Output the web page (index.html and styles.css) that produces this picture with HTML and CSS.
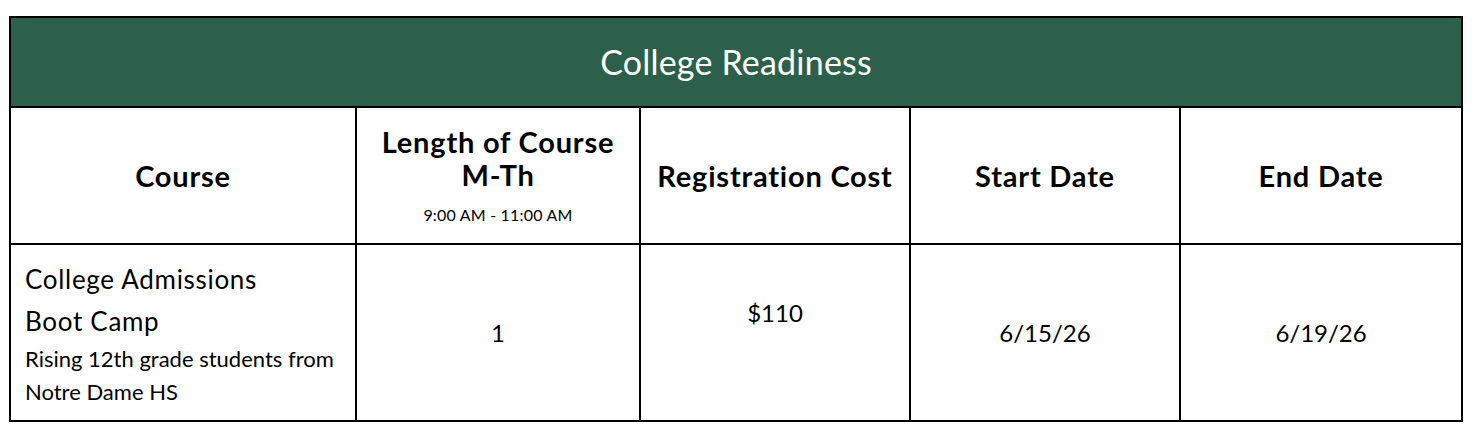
FILE: index.html
```html
<!DOCTYPE html>
<html>
<head>
<meta charset="utf-8">
<link rel="stylesheet" href="styles.css">
</head>
<body>
<table class="sched">
  <colgroup>
    <col class="c1"><col class="c2"><col class="c3"><col class="c4"><col class="c5">
  </colgroup>
  <thead>
    <tr class="title-row"><th colspan="5" class="title">College Readiness</th></tr>
    <tr class="head-row">
      <th>Course</th>
      <th><div>Length of Course</div><div>M-Th</div><div class="time">9:00 AM - 11:00 AM</div></th>
      <th>Registration Cost</th>
      <th>Start Date</th>
      <th>End Date</th>
    </tr>
  </thead>
  <tbody>
    <tr class="body-row">
      <td class="course"><div class="big">College Admissions</div><div class="big">Boot Camp</div><div class="small">Rising 12th grade students from</div><div class="small">Notre Dame HS</div></td>
      <td>1</td>
      <td class="cost">$110</td>
      <td>6/15/26</td>
      <td>6/19/26</td>
    </tr>
  </tbody>
</table>
</body>
</html>
```
FILE: styles.css
```css
html, body {
  margin: 0;
  padding: 0;
  background: #fff;
}
body {
  padding: 16px 0 0 9px;
  font-family: "Lato", "Open Sans", sans-serif;
  color: #000;
}
.sched {
  border-collapse: collapse;
  width: 1452px;
  table-layout: fixed;
}
.c1 { width: 346px; }
.c2 { width: 284px; }
.c3 { width: 270px; }
.c4 { width: 270px; }
.c5 { width: 282px; }
.sched th, .sched td {
  border: 2px solid #000;
  text-align: center;
  vertical-align: middle;
  padding: 0;
}
.title-row { height: 90px; }
.title {
  background: #2d604a;
  color: #fff;
  font-weight: 400;
  font-size: 34px;
  line-height: 40px;
  letter-spacing: 0.2px;
  padding-bottom: 8px;
}
.head-row { height: 137px; }
.head-row th {
  font-weight: 700;
  font-size: 29px;
  line-height: 33px;
  letter-spacing: 0.8px;
}
.head-row .time {
  font-weight: 400;
  font-size: 16px;
  line-height: 22px;
  letter-spacing: 0.2px;
  margin-top: 13px;
}
.body-row { height: 177px; }
.body-row td {
  font-size: 24px;
}
.body-row td.course {
  text-align: left;
  padding-left: 14px;
}
.course .big {
  font-size: 26px;
  line-height: 42px;
  letter-spacing: 0.7px;
}
.course .small {
  font-size: 22px;
  line-height: 33px;
}
.body-row td.cost {
  padding-bottom: 40px;
}
```
